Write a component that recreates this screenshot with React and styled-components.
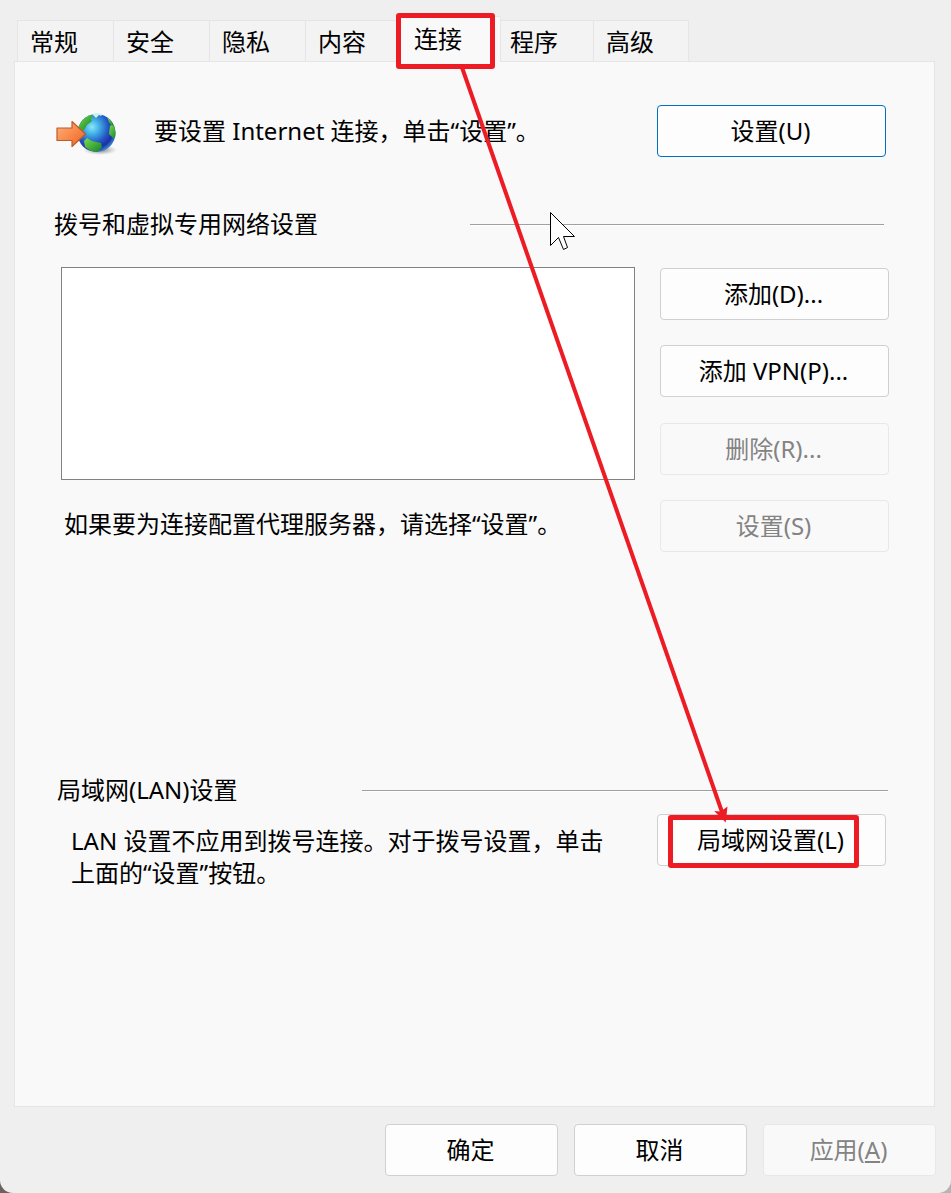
import { useState } from "react";
import styled, { createGlobalStyle, css } from "styled-components";

const GlobalStyle = createGlobalStyle`
  * {
    box-sizing: border-box;
  }

  body {
    margin: 0;
    background: linear-gradient(90deg, #6e625e 50%, #b4b4b4 50%);
    color: #000;
    font-family: "Noto Sans", "Noto Sans CJK SC", sans-serif;
    font-size: 24px;
    line-height: 32px;
  }

  button {
    font: inherit;
    color: inherit;
  }
`;

const Dialog = styled.main`
  position: relative;
  display: flex;
  flex-direction: column;
  min-height: 100vh;
  padding: 16px 15px 17px 14px;
  background: #efefef;
  border-radius: 0 0 13px 13px;
  overflow: hidden;
`;

const TabList = styled.div`
  display: flex;
  align-items: flex-end;
  height: 46px;
  margin-bottom: -1px;
  padding-left: 3px;
`;

const Tab = styled.button`
  position: relative;
  display: flex;
  align-items: flex-start;
  width: 96px;
  height: 42px;
  padding: 5px 0 0 12px;
  background: #f3f3f3;
  border: 1px solid #e5e5e5;
  border-right-width: 0;

  &:last-child {
    border-right-width: 1px;
  }

  ${({ $selected }) =>
    $selected &&
    css`
      z-index: 1;
      width: 104px;
      height: 46px;
      margin: 0 -4px;
      padding: 6px 0 0 16px;
      background: #f9f9f9;
      border-right-width: 1px;
      border-bottom-width: 0;
      border-radius: 2px 2px 0 0;
    `}
`;

const Panel = styled.section`
  flex: 1;
  margin-right: 1px;
  padding-top: 43px;
  background: #f9f9f9;
  border: 1px solid #e5e5e5;
`;

const Intro = styled.div`
  display: flex;
  align-items: center;
  gap: 36px;
  margin: 0 48px 0 41px;

  svg {
    margin-top: 6px;
  }

  p {
    flex: 1;
    margin: 0;
  }
`;

const GroupHeading = styled.div`
  display: flex;
  align-items: center;
  margin: ${({ $margin }) => $margin};

  h2 {
    flex: none;
    width: ${({ $labelWidth }) => $labelWidth}px;
    margin: 0;
    font-size: 24px;
    font-weight: 400;
  }

  &::after {
    content: "";
    flex: 1;
    margin-top: 2px;
    border-top: 1px solid #a0a0a0;
    border-bottom: 1px solid #fff;
  }
`;

const Connections = styled.div`
  display: flex;
  gap: 25px;
  margin: 27px 45px 0 46px;
`;

const ListColumn = styled.div`
  flex: 1;

  p {
    margin: 28px 0 0 3px;
  }
`;

const ConnectionList = styled.div`
  height: 213px;
  background: #fff;
  border: 1px solid #828282;
`;

const ButtonColumn = styled.div`
  display: flex;
  flex-direction: column;
  justify-content: space-between;
  min-height: 285px;
  padding-top: 1px;
`;

const Button = styled.button`
  position: relative;
  flex: none;
  width: ${({ $narrow }) => ($narrow ? 173 : 229)}px;
  height: 52px;
  padding: 0 2px 0 0;
  background: #fdfdfd;
  border: 1px solid ${({ $primary }) => ($primary ? "#0070c4" : "#d0d0d0")};
  border-radius: 4px;

  &:disabled {
    background: #f9f9f9;
    border-color: #e8e8e8;
    color: #838383;
  }
`;

const LanRow = styled.div`
  display: flex;
  gap: 40px;
  margin: 8px 48px 0 56px;

  p {
    flex: 1;
    margin: 0;
    padding-top: 11px;
  }
`;

const Footer = styled.footer`
  display: flex;
  justify-content: flex-end;
  gap: 16px;
  margin-top: 17px;
`;

const Highlight = styled.span`
  position: absolute;
  top: ${({ $top }) => $top}px;
  left: ${({ $left }) => $left}px;
  width: ${({ $width }) => $width}px;
  height: ${({ $height }) => $height}px;
  border: 5px solid #ed1c24;
  border-radius: 3px;
  pointer-events: none;
`;

const Overlay = styled.svg`
  position: absolute;
  top: 0;
  left: 0;
  z-index: 2;
  pointer-events: none;
`;

const tabs = ["常规", "安全", "隐私", "内容", "连接", "程序", "高级"];

function GlobeIcon() {
  return (
    <svg width="62" height="44" viewBox="0 0 62 44" aria-hidden="true">
      <defs>
        <radialGradient id="sea" cx="0.38" cy="0.34" r="0.68">
          <stop offset="0" stopColor="#8be6fa" />
          <stop offset="0.28" stopColor="#43b1e5" />
          <stop offset="0.62" stopColor="#2458c6" />
          <stop offset="0.85" stopColor="#1c2fa4" />
          <stop offset="1" stopColor="#357fcf" />
        </radialGradient>
        <linearGradient id="land" x1="0" y1="0" x2="1" y2="1">
          <stop offset="0" stopColor="#7cdb50" />
          <stop offset="1" stopColor="#128426" />
        </linearGradient>
        <linearGradient id="arrow" x1="0" y1="0" x2="1" y2="1">
          <stop offset="0" stopColor="#ffb27e" />
          <stop offset="0.5" stopColor="#f98a4c" />
          <stop offset="1" stopColor="#ec5e1e" />
        </linearGradient>
        <radialGradient id="shade">
          <stop offset="0" stopColor="#555" stopOpacity="0.8" />
          <stop offset="1" stopColor="#888" stopOpacity="0" />
        </radialGradient>
        <clipPath id="ball">
          <circle cx="40.500" cy="21" r="19" />
        </clipPath>
      </defs>
      <ellipse cx="44" cy="38" rx="17" ry="5" fill="url(#shade)" />
      <circle cx="40.500" cy="21" r="19" fill="url(#sea)" />
      <g clipPath="url(#ball)" fill="url(#land)">
        <path d="M21 18c0-8 6-14 12-16l4 1-2 4 1 2-5 4-3 5-4 1z" />
        <path d="M28 29l3-3 5 3 9 2 1 4-3 3-2 2-6-1-6-4z" />
        <path d="M54 14l3-2 4 5-1 8-3 1-4-4z" />
        <path d="M51 5l4 3 3 6-3-1-2-3z" />
      </g>
      <path d="M36 2l4-1 7 1-2 2-2-1-3 3-2-2z" fill="#cbf1ed" />
      <path
        d="M1 16h15V9.500l13.500 12.500L16 34.500V28.500H1z"
        fill="url(#arrow)"
        stroke="#bb5c2b"
        strokeWidth="1.200"
        strokeLinejoin="round"
      />
    </svg>
  );
}

function ScreenMarks() {
  return (
    <Overlay width="951" height="1193" viewBox="0 0 951 1193" aria-hidden="true">
      <path
        d="M550.5 212.500v33l8-8 5 12 4-2-4-11h11z"
        fill="#fff"
        stroke="#000"
      />
      <path d="M461.500 66L722 812" stroke="#ed1c24" strokeWidth="4" />
      <path d="M725.700 822.500l-11.500-11.500 6.500 0.500 6.800-5z" fill="#ed1c24" />
    </Overlay>
  );
}

export default function App() {
  const [selected, setSelected] = useState("连接");

  return (
    <>
      <GlobalStyle />
      <Dialog>
        <TabList role="tablist">
          {tabs.map((name) => (
            <Tab
              key={name}
              type="button"
              role="tab"
              aria-selected={name === selected}
              $selected={name === selected}
              onClick={() => setSelected(name)}>
              {name}
              {name === "连接" && (
                <Highlight $top={-4} $left={-2} $width={99} $height={56} />
              )}
            </Tab>
          ))}
        </TabList>
        <Panel role="tabpanel" aria-label={selected}>
          <Intro>
            <GlobeIcon />
            <p>要设置 Internet 连接，单击“设置”。</p>
            <Button type="button" $primary>
              设置(U)
            </Button>
          </Intro>

          <GroupHeading $labelWidth={416} $margin="51px 50px 0 39px">
            <h2>拨号和虚拟专用网络设置</h2>
          </GroupHeading>
          <Connections>
            <ListColumn>
              <ConnectionList role="listbox" aria-label="拨号和虚拟专用网络设置" />
              <p>如果要为连接配置代理服务器，请选择“设置”。</p>
            </ListColumn>
            <ButtonColumn>
              <Button type="button">添加(D)...</Button>
              <Button type="button">添加 VPN(P)...</Button>
              <Button type="button" disabled>
                删除(R)...
              </Button>
              <Button type="button" disabled>
                设置(S)
              </Button>
            </ButtonColumn>
          </Connections>

          <GroupHeading $labelWidth={305} $margin="222px 46px 0 42px">
            <h2>局域网(LAN)设置</h2>
          </GroupHeading>
          <LanRow>
            <p>LAN 设置不应用到拨号连接。对于拨号设置，单击上面的“设置”按钮。</p>
            <Button type="button">
              局域网设置(L)
              <Highlight $top={0} $left={10} $width={191} $height={53} />
            </Button>
          </LanRow>
        </Panel>
        <Footer>
          <Button type="button" $narrow>
            确定
          </Button>
          <Button type="button" $narrow>
            取消
          </Button>
          <Button type="button" $narrow disabled>
            应用(<u>A</u>)
          </Button>
        </Footer>
        <ScreenMarks />
      </Dialog>
    </>
  );
}
